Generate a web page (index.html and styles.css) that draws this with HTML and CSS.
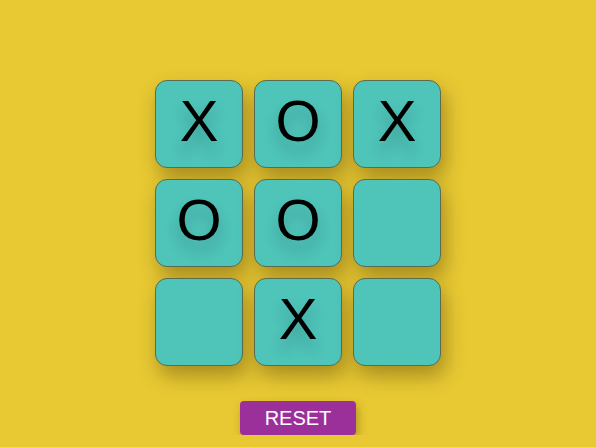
FILE: index.html
```html
<!DOCTYPE html>
<html>
<head>
<meta charset="utf-8">
<link rel="stylesheet" href="styles.css">
</head>
<body>
<main class="game">
  <div class="board">
    <div class="cell">X</div>
    <div class="cell">O</div>
    <div class="cell">X</div>
    <div class="cell">O</div>
    <div class="cell">O</div>
    <div class="cell"></div>
    <div class="cell"></div>
    <div class="cell">X</div>
    <div class="cell"></div>
  </div>
  <button class="reset">RESET</button>
</main>
</body>
</html>
```
FILE: styles.css
```css
html, body {
  margin: 0;
  padding: 0;
  background: #e8c933;
  font-family: "Liberation Sans", Arial, sans-serif;
}
.game {
  display: flex;
  flex-direction: column;
  align-items: center;
  padding-top: 80px;
}
.board {
  display: grid;
  grid-template-columns: repeat(3, 88px);
  grid-auto-rows: 88px;
  gap: 11px;
}
.cell {
  box-sizing: border-box;
  background: #4fc4b9;
  border: 1px solid #5a6b50;
  border-radius: 12px;
  box-shadow: 4px 10px 20px rgba(70, 50, 0, 0.4);
  display: flex;
  align-items: center;
  justify-content: center;
  padding-bottom: 7px;
  font-size: 58px;
  color: #000;
  line-height: 1;
  text-shadow: 0 10px 14px rgba(0, 40, 40, 0.25);
}
.reset {
  margin-top: 35px;
  width: 116px;
  height: 34px;
  background: #9b309b;
  color: #fff;
  border: none;
  border-radius: 4px;
  font-family: "Liberation Sans", Arial, sans-serif;
  font-size: 20px;
  box-shadow: 2px 4px 10px rgba(70, 50, 0, 0.35);
  padding: 0;
}
```
